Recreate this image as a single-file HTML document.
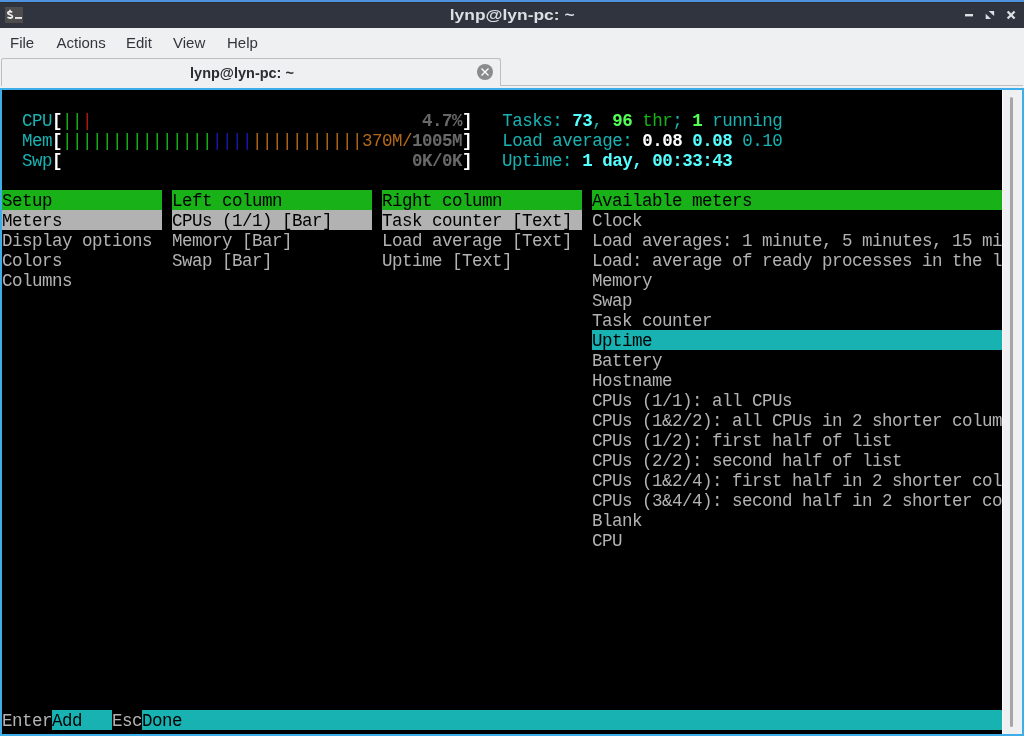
<!DOCTYPE html>
<html><head><meta charset="utf-8">
<style>
*{margin:0;padding:0;box-sizing:border-box}
html,body{width:1024px;height:736px;overflow:hidden;background:#3daee9;position:relative;-webkit-font-smoothing:antialiased}
#term,#titlebar,#menubar{will-change:transform}
#titlebar{position:absolute;left:0;top:2px;width:1024px;height:26px;background:#30343f}
#title{position:absolute;left:0;top:0;width:1024px;height:26px;text-align:center;font:bold 15px/26px "Liberation Sans",sans-serif;color:#dcdfe4;transform:scaleX(1.16);transform-origin:511px 0}
#icon{position:absolute;left:5px;top:5px;width:18px;height:15.5px;background:#4d4d4d}
#menubar{position:absolute;left:0;top:28px;width:1024px;height:60px;background:#eff0f1}
.mi{position:absolute;top:6px;font:15px/17px "Liberation Sans",sans-serif;color:#31363b}
#tab{position:absolute;left:1px;top:30px;width:500px;height:28px;border:1px solid #bcbebf;border-bottom:none;border-radius:3px 3px 0 0;background:#eff0f1}
#tabline{position:absolute;left:500px;top:57px;width:523px;height:1px;background:#bcbebf}
#tabtext{position:absolute;left:0;top:1px;width:480px;text-align:center;font:bold 15px/26px "Liberation Sans",sans-serif;color:#2a2e32;transform:scaleX(0.965);transform-origin:240px 0}
#closebtn{position:absolute;left:475px;top:5px;width:16px;height:16px;border-radius:50%;background:#8a8b8c}
#term{position:absolute;left:2px;top:90px;width:1000px;height:644px;background:#000}
#scroll{position:absolute;left:1002px;top:90px;width:20px;height:644px;background:#eff0f1;border-left:1px solid #fcfcfc}
#handle{position:absolute;left:7px;top:7px;width:3px;height:630px;border-radius:2px;background:#a5a6a8}
.row{position:absolute;left:0;height:20px;width:1000px;font:17.5px/20px "Liberation Mono",monospace;letter-spacing:-0.5017px;white-space:pre;color:#b2b2b2;padding-top:1px}
.cy{color:#18b2b2}.bcy{color:#54ffff;font-weight:bold}.gr{color:#18b218}.bgr{color:#54ff54;font-weight:bold}
.wh{color:#ffffff;font-weight:bold}.bl{color:#1818b2}.or{color:#b26818}.rd{color:#b21818}.dg{color:#686868;font-weight:bold}
.gbg,.sbg,.cbg{color:#000}
.bg{position:absolute;height:20px}
</style></head><body>
<div style="position:absolute;left:0;top:0;width:1024px;height:2px;background:#4f93e0"></div>
<div id="titlebar"><div style="position:absolute;left:0;top:0;width:1024px;height:1px;background:#2c2e34"></div>
  <div id="icon"><svg width="18" height="15" viewBox="0 0 18 15" style="position:absolute;left:0;top:0">
    <path d="M7.2,5.3 C6.6,4.9 5.9,4.6 5,4.6 C3.6,4.6 2.8,5.2 2.8,6.1 C2.8,8.1 7.4,7.3 7.4,9.4 C7.4,10.4 6.5,10.9 5,10.9 C4,10.9 3.2,10.6 2.5,10.1 M5,2.8 V4.6 M5,10.9 V12" stroke="#f0f0f0" stroke-width="1.7" fill="none"/>
    <rect x="10" y="10" width="7" height="1.9" fill="#e8e8e8"/></svg></div>
  <div id="title">lynp@lyn-pc: ~</div>
  <svg width="60" height="26" viewBox="0 0 60 26" style="position:absolute;left:960px;top:0">
    <rect x="5" y="12" width="8" height="2.4" fill="#dcdfe4"/>
    <polygon points="28.7,9.1 34.1,9.1 34.1,14.1" fill="#dcdfe4"/>
    <polygon points="25.7,11.8 25.7,17 31,17" fill="#dcdfe4"/>
    <path d="M48.4,10.3 L53.8,15.7 M53.8,10.3 L48.4,15.7" stroke="#dcdfe4" stroke-width="2.3" stroke-linecap="square"/>
  </svg>
</div>
<div id="menubar">
  <div class="mi" style="left:10px">File</div>
  <div class="mi" style="left:56.5px">Actions</div>
  <div class="mi" style="left:126px">Edit</div>
  <div class="mi" style="left:173px">View</div>
  <div class="mi" style="left:227px">Help</div>
  <div id="tab"><div id="tabtext">lynp@lyn-pc: ~</div>
    <div id="closebtn"><svg width="16" height="16" viewBox="0 0 16 16" style="position:absolute;left:0;top:0"><path d="M4.5,4.5 L11.5,11.5 M11.5,4.5 L4.5,11.5" stroke="#fff" stroke-width="1.3"/></svg></div>
  </div>
  <div id="tabline"></div>
</div>
<div id="term">
<div class="bg" style="left:0px;top:100px;width:160px;background:#18b218"></div>
<div class="bg" style="left:170px;top:100px;width:200px;background:#18b218"></div>
<div class="bg" style="left:380px;top:100px;width:200px;background:#18b218"></div>
<div class="bg" style="left:590px;top:100px;width:410px;background:#18b218"></div>
<div class="bg" style="left:0px;top:120px;width:160px;background:#b2b2b2"></div>
<div class="bg" style="left:170px;top:120px;width:200px;background:#b2b2b2"></div>
<div class="bg" style="left:380px;top:120px;width:200px;background:#b2b2b2"></div>
<div class="bg" style="left:590px;top:240px;width:410px;background:#18b2b2"></div>
<div class="bg" style="left:50px;top:620px;width:60px;background:#18b2b2"></div>
<div class="bg" style="left:140px;top:620px;width:860px;background:#18b2b2"></div>
<div class="row" style="top:20px">  <span class="cy">CPU</span><span class="wh">[</span><span class="gr">||</span><span class="rd">|</span>                                 <span class="dg">4.7%</span><span class="wh">]</span>   <span class="cy">Tasks: </span><span class="bcy">73</span><span class="cy">, </span><span class="bgr">96</span><span class="cy"> </span><span class="gr">thr</span><span class="cy">; </span><span class="bgr">1</span><span class="cy"> running</span></div>
<div class="row" style="top:40px">  <span class="cy">Mem</span><span class="wh">[</span><span class="gr">|||||||||||||||</span><span class="bl">||||</span><span class="or">|||||||||||370M/</span><span class="dg">1005M</span><span class="wh">]</span>   <span class="cy">Load average: </span><span class="wh">0.08 </span><span class="bcy">0.08 </span><span class="cy">0.10</span></div>
<div class="row" style="top:60px">  <span class="cy">Swp</span><span class="wh">[</span>                                   <span class="dg">0K/0K</span><span class="wh">]</span>   <span class="cy">Uptime: </span><span class="bcy">1 day, 00:33:43</span></div>
<div class="row" style="top:100px"><span class="gbg">Setup           </span> <span class="gbg">Left column         </span> <span class="gbg">Right column        </span> <span class="gbg">Available meters                         </span></div>
<div class="row" style="top:120px"><span class="sbg">Meters          </span> <span class="sbg">CPUs (1/1) [Bar]    </span> <span class="sbg">Task counter [Text] </span> Clock</div>
<div class="row" style="top:140px">Display options  Memory [Bar]         Load average [Text]  Load averages: 1 minute, 5 minutes, 15 mi</div>
<div class="row" style="top:160px">Colors           Swap [Bar]           Uptime [Text]        Load: average of ready processes in the l</div>
<div class="row" style="top:180px">Columns                                                    Memory</div>
<div class="row" style="top:200px">                                                           Swap</div>
<div class="row" style="top:220px">                                                           Task counter</div>
<div class="row" style="top:240px">                                                           <span class="cbg">Uptime                                   </span></div>
<div class="row" style="top:260px">                                                           Battery</div>
<div class="row" style="top:280px">                                                           Hostname</div>
<div class="row" style="top:300px">                                                           CPUs (1/1): all CPUs</div>
<div class="row" style="top:320px">                                                           CPUs (1&amp;2/2): all CPUs in 2 shorter colum</div>
<div class="row" style="top:340px">                                                           CPUs (1/2): first half of list</div>
<div class="row" style="top:360px">                                                           CPUs (2/2): second half of list</div>
<div class="row" style="top:380px">                                                           CPUs (1&amp;2/4): first half in 2 shorter col</div>
<div class="row" style="top:400px">                                                           CPUs (3&amp;4/4): second half in 2 shorter co</div>
<div class="row" style="top:420px">                                                           Blank</div>
<div class="row" style="top:440px">                                                           CPU</div>
<div class="row" style="top:620px">Enter<span class="cbg">Add   </span>Esc<span class="cbg">Done                                                                                  </span></div>
</div>
<div id="scroll"><div id="handle"></div></div>
</body></html>
